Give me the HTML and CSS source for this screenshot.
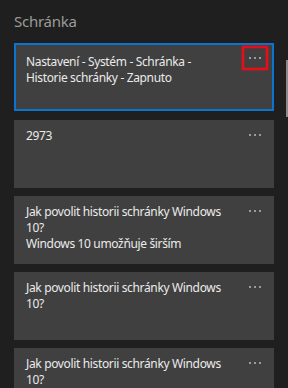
FILE: index.html
```html
<!DOCTYPE html>
<html lang="cs">

<head>
    <meta charset="UTF-8">
    <meta name="viewport" content="width=device-width, initial-scale=1.0">
    <title>Schránka</title>
    <link rel="stylesheet" href="styles.css">
</head>

<body>
    <div class="clipboard">
        <!-- nadpis panelu -->
        <h1 class="clip-title">Schránka</h1>

        <!-- seznam položek historie -->
        <ul class="clip-list">
            <li class="clip-item on">
                <p class="clip-text">Nastavení - Systém - Schránka -<br>Historie schránky - Zapnuto</p>
                <a href="javascript:0" class="clip-more"><i></i><i></i><i></i></a>
            </li>
            <li class="clip-item">
                <p class="clip-text">2973</p>
                <a href="javascript:0" class="clip-more"><i></i><i></i><i></i></a>
            </li>
            <li class="clip-item">
                <p class="clip-text">Jak povolit historii schránky Windows<br>10?<br>Windows 10 umožňuje širším</p>
                <a href="javascript:0" class="clip-more"><i></i><i></i><i></i></a>
            </li>
            <li class="clip-item">
                <p class="clip-text">Jak povolit historii schránky Windows<br>10?</p>
                <a href="javascript:0" class="clip-more"><i></i><i></i><i></i></a>
            </li>
            <li class="clip-item">
                <p class="clip-text">Jak povolit historii schránky Windows<br>10?</p>
                <a href="javascript:0" class="clip-more"><i></i><i></i><i></i></a>
            </li>
        </ul>

        <!-- posuvník -->
        <div class="clip-scroll"></div>
    </div>
</body>

</html>
```

FILE: styles.css
```css
html,
body,
div,
ul,
li,
h1,
p {
    padding: 0;
    margin: 0;
}

ul {
    list-style: none;
}

a {
    text-decoration: none;
}

body {
    background-color: #1f1f1f;
    font-family: "Noto Sans", "Open Sans", sans-serif;
    overflow: hidden;
}

.clipboard {
    position: relative;
    height: 388px;
    overflow: hidden;
}

.clip-title {
    font-size: 15px;
    font-weight: normal;
    line-height: 20px;
    letter-spacing: -0.25px;
    color: #9b9b9b;
    padding: 11px 14px 12px;
}

.clip-list {
    padding: 0 14px;
}

.clip-item {
    display: flex;
    align-items: flex-start;
    box-sizing: border-box;
    height: 68px;
    margin-bottom: 8px;
    padding: 8px 6px 0 12px;
    background-color: #404040;
}

.clip-item.on {
    border: 2px solid #0a74cf;
    padding: 9px 4px 0 10px;
    margin-bottom: 9px;
}

.clip-text {
    flex: 1;
    font-size: 12px;
    line-height: 16px;
    letter-spacing: -0.35px;
    color: #ebebeb;
}

/* tlačítko se třemi tečkami */

.clip-more {
    display: flex;
    justify-content: center;
    align-items: center;
    gap: 3px;
    width: 26px;
    height: 14px;
    box-sizing: border-box;
}

.clip-more i {
    width: 2px;
    height: 2px;
    background-color: #9a9a9a;
}

.clip-item.on .clip-more {
    height: 24px;
    margin-top: -8px;
    border: 2px solid #e3101c;
    box-shadow: 0 0 2px #e3101c, inset 0 0 2px #e3101c;
}

.clip-scroll {
    position: absolute;
    top: 60px;
    right: 0;
    width: 2px;
    height: 57px;
    background-color: #8a8a8a;
}
```
